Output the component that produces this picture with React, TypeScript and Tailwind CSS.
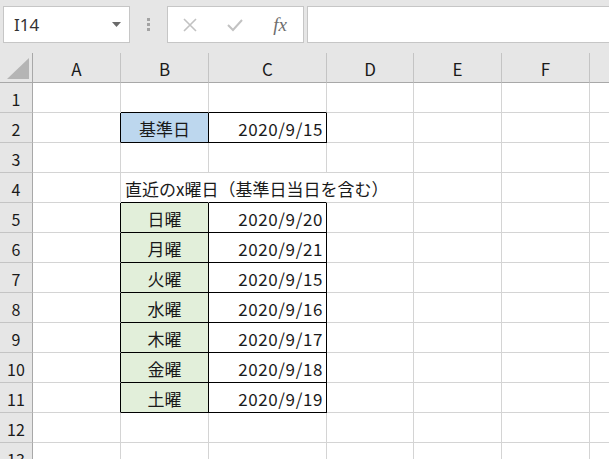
import React from "react";

const FONT = "font-['Noto_Sans_CJK_JP',sans-serif]";

const DAYS = [
  ["日曜", "2020/9/20"],
  ["月曜", "2020/9/21"],
  ["火曜", "2020/9/15"],
  ["水曜", "2020/9/16"],
  ["木曜", "2020/9/17"],
  ["金曜", "2020/9/18"],
  ["土曜", "2020/9/19"],
];

// black-bordered cells, col A=1, B=2, C=3 ...
const inTable = (r: number, c: number) =>
  (r === 2 && (c === 2 || c === 3)) || (r >= 5 && r <= 11 && (c === 2 || c === 3));

const HEADERS = ["A", "B", "C", "D", "E", "F", ""];

function Cell({ r, c, children }: { r: number; c: number; children?: React.ReactNode }) {
  let right = inTable(r, c) || inTable(r, c + 1) ? "border-r-black" : "border-r-[#d4d4d4]";
  // row 4 text overflows B4 into C4/D4, so those gridlines are hidden
  if (r === 4 && (c === 2 || c === 3)) right = "border-r-white";
  const bottom = inTable(r, c) || inTable(r + 1, c) ? "border-b-black" : "border-b-[#d4d4d4]";
  let bg = "bg-white";
  if (r === 2 && c === 2) bg = "bg-[#bdd7ee]";
  if (r >= 5 && r <= 11 && c === 2) bg = "bg-[#e2efda]";
  const over = r === 4 && c === 2 ? "relative z-10" : "";
  return (
    <div
      className={`h-[30px] border-r border-b ${right} ${bottom} ${bg} ${over} flex items-center overflow-visible whitespace-nowrap`}
    >
      {children}
    </div>
  );
}

function cellContent(r: number, c: number) {
  if (r === 2 && c === 2) return <span className="w-full text-center pt-[2px]">基準日</span>;
  if (r === 2 && c === 3) return <span className="w-full text-right pr-[3px] pt-[2px] tracking-[0.6px]">2020/9/15</span>;
  if (r === 4 && c === 2) return <span className="pl-[4px] pt-[2px]">直近のx曜日（基準日当日を含む）</span>;
  if (r >= 5 && r <= 11) {
    const d = DAYS[r - 5];
    if (c === 2) return <span className="w-full text-center pt-[2px]">{d[0]}</span>;
    if (c === 3) return <span className="w-full text-right pr-[3px] pt-[2px] tracking-[0.6px]">{d[1]}</span>;
  }
  return null;
}

export default function App() {
  const rows = Array.from({ length: 13 }, (_, i) => i + 1);
  return (
    <div className={`w-[609px] h-[459px] overflow-hidden bg-[#e6e6e6] ${FONT} text-[17px] text-[#1a1a1a]`}>
      {/* formula toolbar */}
      <div className="h-[53px] flex items-start pt-[6px] pl-[3px]">
        <div className="shrink-0 w-[127px] h-[37px] bg-white border border-[#c6c6c6] flex items-center justify-between pl-[10px] pr-[8px]">
          <span className="text-[17px] text-[#333] font-['Noto_Sans',sans-serif]">I14</span>
          <svg width="9" height="6" viewBox="0 0 9 6">
            <path d="M0 0 L9 0 L4.5 5 Z" fill="#6a6a6a" />
          </svg>
        </div>
        <div className="shrink-0 w-[37px] h-[37px] flex flex-col items-center justify-center gap-[2px]">
          <div className="w-[3px] h-[3px] bg-[#a3a3a3]" />
          <div className="w-[3px] h-[3px] bg-[#a3a3a3]" />
          <div className="w-[3px] h-[3px] bg-[#a3a3a3]" />
        </div>
        <div className="shrink-0 w-[137px] h-[37px] bg-white border border-[#c6c6c6] flex items-center">
          <div className="w-[44px] flex justify-center">
            <svg width="16" height="16" viewBox="0 0 16 16">
              <path d="M2 2 L14 14 M14 2 L2 14" stroke="#c2c2c2" strokeWidth="1.6" />
            </svg>
          </div>
          <div className="w-[46px] flex justify-center">
            <svg width="18" height="16" viewBox="0 0 18 16">
              <path d="M2 8 L7 13 L16 3" stroke="#c2c2c2" strokeWidth="2" fill="none" />
            </svg>
          </div>
          <div className="w-[46px] flex justify-center">
            <span className="font-['Liberation_Serif',serif] italic text-[19px] text-[#6e6e6e] leading-none">fx</span>
          </div>
        </div>
        <div className="shrink-0 ml-[3px] w-[400px] h-[37px] bg-white border border-[#c6c6c6]" />
      </div>

      {/* sheet grid */}
      <div className="grid grid-cols-[33px_88px_88px_118px_87px_88px_88px_40px]">
        <div className="h-[30px] border-r border-b border-r-[#a8a8a8] border-b-[#a8a8a8] bg-[#e6e6e6] relative">
          <svg className="absolute left-[7px] top-[5px]" width="23" height="22" viewBox="0 0 23 22">
            <path d="M0 21 L22 21 L22 0 Z" fill="#b5b5b5" />
          </svg>
        </div>
        {HEADERS.map((h, i) => (
          <div
            key={i}
            className="h-[30px] border-r border-b border-r-[#c4c4c4] border-b-[#a8a8a8] bg-[#e6e6e6] flex items-center justify-center pt-[2px]"
          >
            {h}
          </div>
        ))}

        {rows.map((r) => (
          <React.Fragment key={r}>
            <div className="h-[30px] border-r border-b border-r-[#a8a8a8] border-b-[#c4c4c4] bg-[#e6e6e6] flex items-center justify-center pt-[2px] text-[16px]">
              {r}
            </div>
            {[1, 2, 3, 4, 5, 6, 7].map((c) => (
              <Cell key={c} r={r} c={c}>
                {cellContent(r, c)}
              </Cell>
            ))}
          </React.Fragment>
        ))}
      </div>
    </div>
  );
}
